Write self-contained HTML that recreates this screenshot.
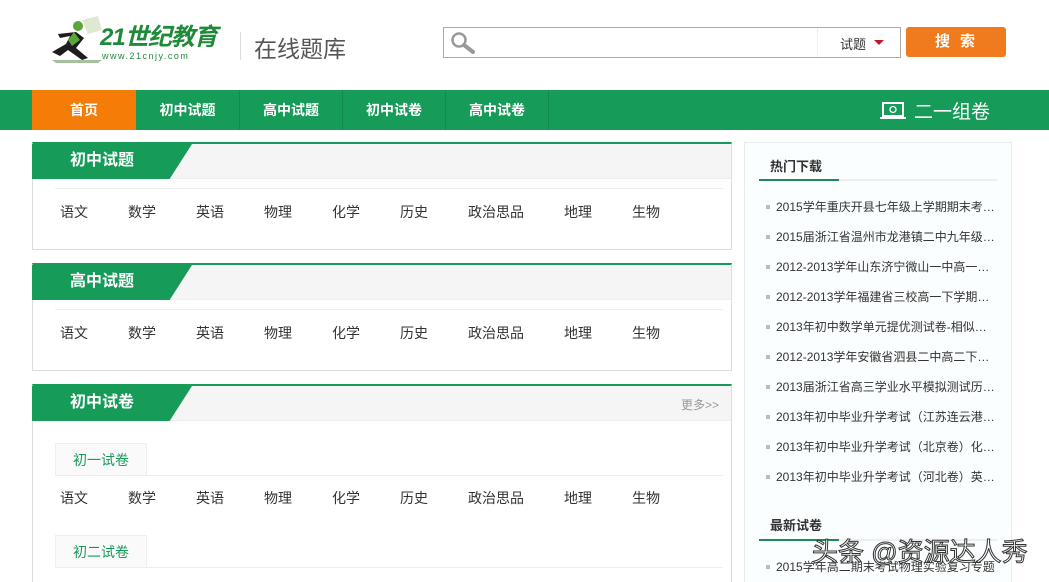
<!DOCTYPE html><html><head><meta charset="utf-8"><style>
*{margin:0;padding:0;box-sizing:border-box}
html,body{width:1049px;height:582px;overflow:hidden}
body{background:#fff;font-family:"Liberation Sans","Noto Sans CJK SC",sans-serif;position:relative;color:#333}
.a{position:absolute}
.nav a{position:absolute;top:90px;height:40px;line-height:40px;color:#fff;font-weight:bold;font-size:14px;text-align:center;border-right:1px solid #128a4c}
.panel{position:absolute;left:32px;width:700px;border:1px solid #ddd;border-top:2px solid #169b58;background:#fff}
.ph{height:35px;background:#f5f5f5;position:relative;border-bottom:1px solid #eee}
.tab{position:absolute;left:-1px;top:0;height:35px;width:160px;background:#169b58;clip-path:polygon(0 0,100% 0,86% 100%,0 100%);color:#fff;font-weight:bold;font-size:16px;line-height:34px;padding-left:38px}
.subs{position:absolute;font-size:14px;color:#333}
.subs span{position:absolute;white-space:nowrap}
.line{position:absolute;left:22px;width:668px;height:1px;background:#eee}
.stab{position:absolute;left:22px;width:92px;height:32px;border:1px solid #eee;border-bottom:none;background:#fafafa;color:#169b58;font-size:14px;line-height:32px;text-align:center}
.rl{position:absolute;left:776px;font-size:12px;color:#333;white-space:nowrap}
.rl:before{content:"";position:absolute;left:-10px;top:7px;width:4px;height:4px;background:#bbb}
</style></head><body>
<svg class="a" style="left:48px;top:16px" width="60" height="48" viewBox="0 0 60 48"><path d="M34 4 L50 0 L54 14 L40 18Z" fill="#dfe8d0"/><circle cx="30" cy="10" r="5" fill="#5aa63a"/><path d="M28 16 L36 22 L28 32 L40 42 L34 44 L20 34 L12 40 L4 36 L18 28 L22 20 L12 22 L10 18Z" fill="#1d1d1d"/><path d="M26 16 L32 24 L24 30 L20 24Z" fill="#5aa63a"/><path d="M4 44 L54 44 L50 47 L8 47Z" fill="#6a9a5a" opacity=".6"/></svg>
<div class="a" style="left:100px;top:24px;font-size:24px;font-weight:bold;font-style:italic;color:#1f8a3a;letter-spacing:-1px;line-height:28px">21世纪教育</div>
<div class="a" style="left:102px;top:51px;font-size:9px;color:#1f8a3a;letter-spacing:1.5px;line-height:10px">www.21cnjy.com</div>
<div class="a" style="left:240px;top:32px;width:1px;height:28px;background:#ddd"></div>
<div class="a" style="left:254px;top:30px;font-size:23px;color:#555">在线题库</div>
<div class="a" style="left:443px;top:27px;width:458px;height:31px;border:1px solid #aaa;background:#fff"></div>
<svg class="a" style="left:449px;top:30px" width="28" height="24"><circle cx="10" cy="10" r="6.5" fill="none" stroke="#999" stroke-width="2.5"/><path d="M15 15 L24 22" stroke="#999" stroke-width="4" stroke-linecap="round"/></svg>
<div class="a" style="left:817px;top:28px;width:1px;height:29px;background:#eee"></div>
<div class="a" style="left:840px;top:34px;font-size:13px;color:#333">试题</div>
<div class="a" style="left:874px;top:40px;width:0;height:0;border:5px solid transparent;border-top:5px solid #c0182a;border-bottom:0"></div>
<div class="a" style="left:906px;top:27px;width:100px;height:30px;background:#f07b1e;border-radius:3px;color:#fff;font-weight:bold;font-size:15px;text-align:center;line-height:30px;letter-spacing:10px;padding-left:8px">搜索</div>
<div class="a" style="left:0;top:90px;width:1049px;height:40px;background:#169b58"></div>
<div class="nav"><a style="left:32px;width:104px;background:#f67c08;border:none">首页</a><a style="left:136px;width:104px">初中试题</a><a style="left:240px;width:103px">高中试题</a><a style="left:343px;width:103px">初中试卷</a><a style="left:446px;width:103px">高中试卷</a></div>
<svg class="a" style="left:880px;top:102px" width="26" height="18"><rect x="3" y="1" width="20" height="13" fill="none" stroke="#fff" stroke-width="2"/><circle cx="13" cy="7.5" r="3" fill="none" stroke="#fff" stroke-width="1.3"/><rect x="0" y="15" width="26" height="2" fill="#fff"/></svg>
<div class="a" style="left:914px;top:97px;font-size:19px;color:#fff">二一组卷</div>

<div class="panel" style="top:142px;height:108px"><div class="ph"><div class="tab">初中试题</div></div><div class="line" style="top:44px"></div>
<div class="subs" style="top:58px;left:0"><span style="left:27px">语文</span><span style="left:95px">数学</span><span style="left:163px">英语</span><span style="left:231px">物理</span><span style="left:299px">化学</span><span style="left:367px">历史</span><span style="left:435px">政治思品</span><span style="left:531px">地理</span><span style="left:599px">生物</span></div></div>
<div class="panel" style="top:263px;height:108px"><div class="ph"><div class="tab">高中试题</div></div><div class="line" style="top:44px"></div>
<div class="subs" style="top:58px;left:0"><span style="left:27px">语文</span><span style="left:95px">数学</span><span style="left:163px">英语</span><span style="left:231px">物理</span><span style="left:299px">化学</span><span style="left:367px">历史</span><span style="left:435px">政治思品</span><span style="left:531px">地理</span><span style="left:599px">生物</span></div></div>
<div class="panel" style="top:384px;height:210px"><div class="ph"><div class="tab">初中试卷</div><span style="position:absolute;right:12px;top:10px;font-size:12px;color:#999">更多&gt;&gt;</span></div>
<div class="stab" style="top:57px">初一试卷</div><div class="line" style="top:89px"></div>
<div class="subs" style="top:102px;left:0"><span style="left:27px">语文</span><span style="left:95px">数学</span><span style="left:163px">英语</span><span style="left:231px">物理</span><span style="left:299px">化学</span><span style="left:367px">历史</span><span style="left:435px">政治思品</span><span style="left:531px">地理</span><span style="left:599px">生物</span></div>
<div class="stab" style="top:149px">初二试卷</div><div class="line" style="top:181px"></div></div>

<div class="a" style="left:744px;top:142px;width:268px;height:450px;background:#fbfefe;border:1px solid #e3eeee"></div>
<div class="a" style="left:770px;top:156px;font-size:13px;font-weight:bold;color:#333">热门下载</div>
<div class="a" style="left:759px;top:179px;width:238px;height:2px;background:#eee"></div>
<div class="a" style="left:759px;top:179px;width:80px;height:2px;background:#1e8a5a"></div>
<div class="rl" style="top:198px">2015学年重庆开县七年级上学期期末考…</div>
<div class="rl" style="top:228px">2015届浙江省温州市龙港镇二中九年级…</div>
<div class="rl" style="top:258px">2012-2013学年山东济宁微山一中高一…</div>
<div class="rl" style="top:288px">2012-2013学年福建省三校高一下学期…</div>
<div class="rl" style="top:318px">2013年初中数学单元提优测试卷-相似…</div>
<div class="rl" style="top:348px">2012-2013学年安徽省泗县二中高二下…</div>
<div class="rl" style="top:378px">2013届浙江省高三学业水平模拟测试历…</div>
<div class="rl" style="top:408px">2013年初中毕业升学考试（江苏连云港…</div>
<div class="rl" style="top:438px">2013年初中毕业升学考试（北京卷）化…</div>
<div class="rl" style="top:468px">2013年初中毕业升学考试（河北卷）英…</div>
<div class="a" style="left:770px;top:515px;font-size:13px;font-weight:bold;color:#333">最新试卷</div>
<div class="a" style="left:759px;top:539px;width:238px;height:2px;background:#eee"></div>
<div class="a" style="left:759px;top:539px;width:80px;height:2px;background:#1e8a5a"></div>
<div class="rl" style="top:558px">2015学年高二期末考试物理实验复习专题</div>
<div class="a" style="left:812px;top:532px;font-size:26px;color:#fff;-webkit-text-stroke:1px #333;white-space:nowrap">头条 @资源达人秀</div>
</body></html>
